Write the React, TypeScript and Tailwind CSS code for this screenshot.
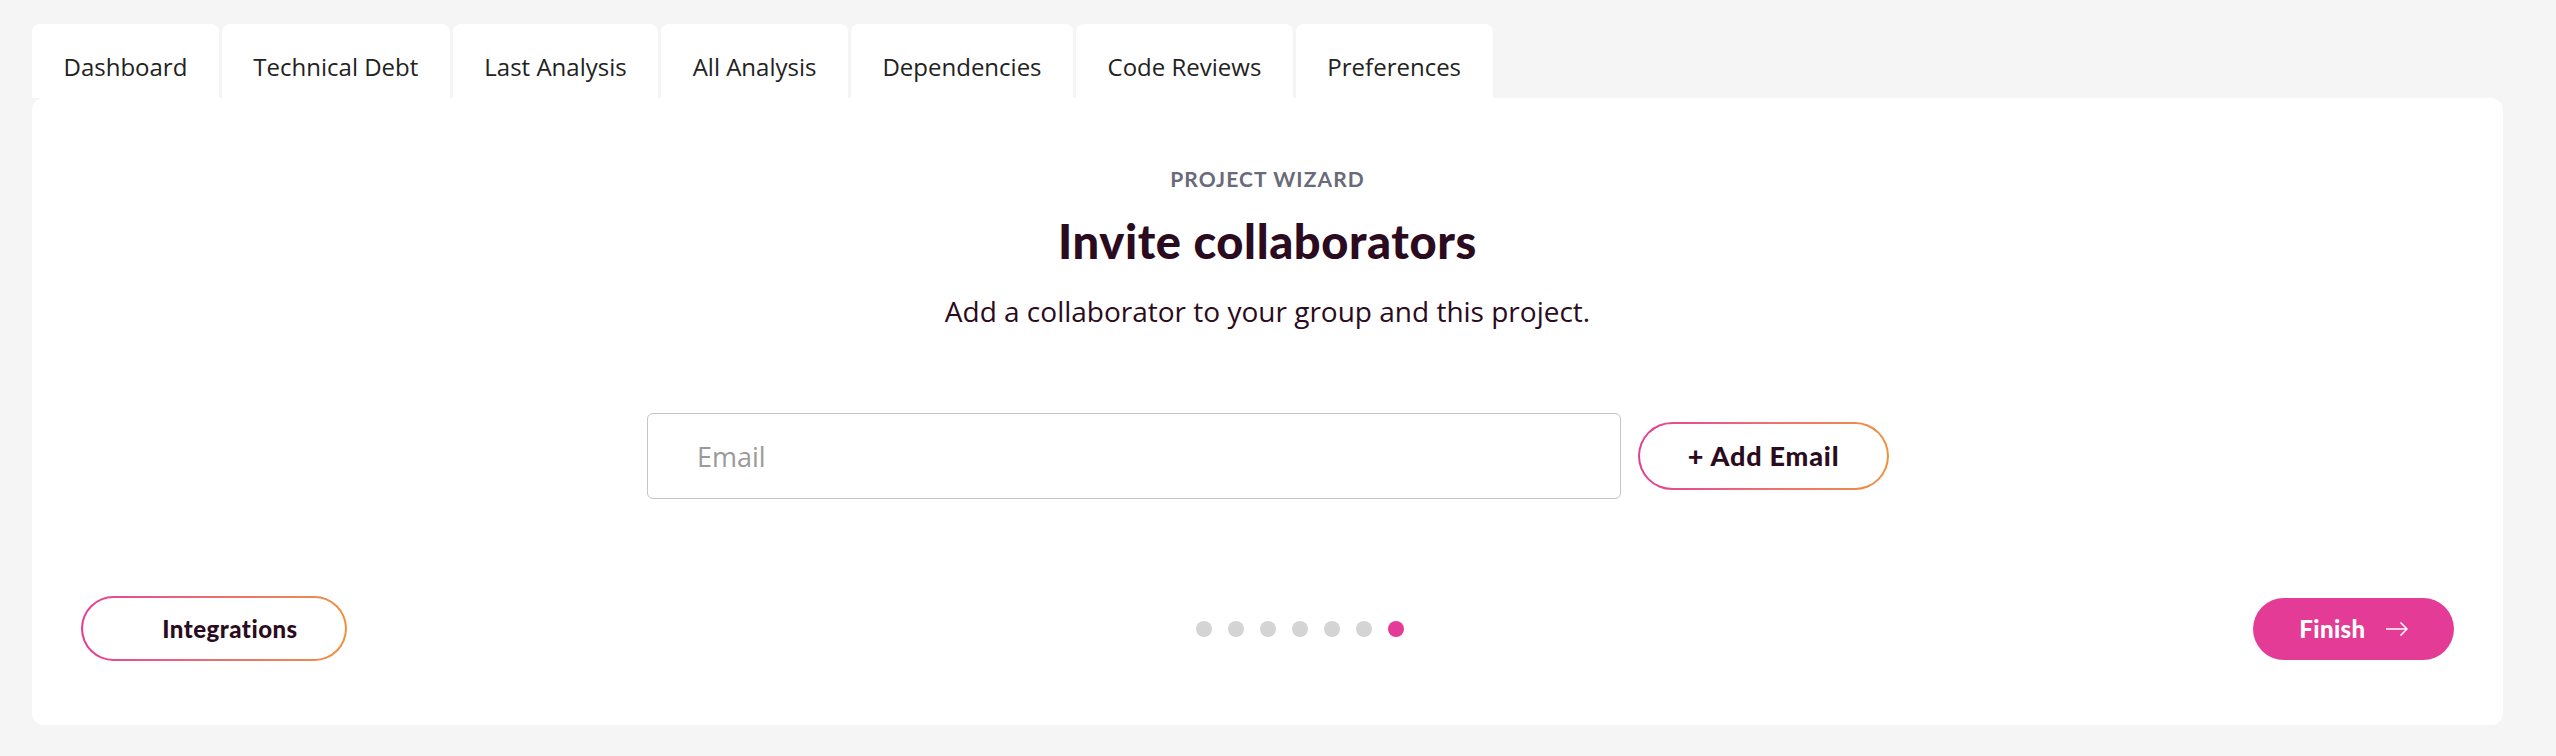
const tabs = ['Dashboard', 'Technical Debt', 'Last Analysis', 'All Analysis', 'Dependencies', 'Code Reviews', 'Preferences']

function GradientPill({ children, className }: { children: React.ReactNode; className: string }) {
  return (
    <div className={`rounded-full bg-gradient-to-r from-[#e43c96] to-[#f0913a] p-[2px] ${className}`}>
      <div className="flex h-full w-full items-center justify-center rounded-full bg-white">{children}</div>
    </div>
  )
}

export default function App() {
  const steps = Array.from({ length: 7 }, (_, i) => i)

  return (
    <div className="min-h-[756px] w-full bg-[#f5f5f5] px-8 pt-6 pb-[31px] font-['Open_Sans',sans-serif]">
      <div className="flex gap-[3px]">
        {tabs.map(t => (
          <div key={t} className="flex h-[74px] items-center rounded-t-lg bg-white px-[31.5px] pt-3 text-[24px] text-[#222]">
            {t}
          </div>
        ))}
      </div>

      <div className="flex w-[2471px] flex-col items-center rounded-xl bg-white pt-[69px] pb-16">
        <div className="text-[21px] leading-6 font-bold tracking-[1.1px] text-[#696a7a] font-['Lato',sans-serif]">PROJECT WIZARD</div>
        <h1 className="mt-[23px] text-[47px] leading-[55px] font-black tracking-[0.6px] text-[#2b0b20] font-['Lato',sans-serif]">Invite collaborators</h1>
        <p className="mt-6 text-[28px] leading-9 text-[#2b0b20]">Add a collaborator to your group and this project.</p>

        <div className="mt-[84px] flex items-center gap-[17px] pl-[1px]">
          <input
            className="h-[86px] w-[974px] rounded-md border-[1.5px] border-[#c9c0c9] px-[49px] text-[27px] text-[#333] placeholder:text-[#9a9a9a] focus:outline-none"
            placeholder="Email"
          />
          <GradientPill className="h-[68px] w-[251px]">
            <span className="text-[27px] font-black tracking-[0.8px] text-[#2b0b20] font-['Lato',sans-serif]">+ Add Email</span>
          </GradientPill>
        </div>

        <div className="mt-[97px] flex w-full items-center justify-between px-[49px]">
          <GradientPill className="h-[65px] w-[266px]">
            <span className="pl-8 text-[24px] font-black tracking-[0.5px] text-[#2b0b20] font-['Lato',sans-serif]">Integrations</span>
          </GradientPill>

          <div className="flex gap-4">
            {steps.map(i => (
              <span key={i} className={`h-4 w-4 rounded-full ${i === 6 ? 'bg-[#e33b96]' : 'bg-[#d4d4d4]'}`} />
            ))}
          </div>

          <button className="flex h-[62px] w-[201px] items-center justify-center gap-5 rounded-full bg-[#e33b96] text-[24px] font-black tracking-[0.4px] text-white font-['Lato',sans-serif]">
            Finish
            <svg width="22" height="14" viewBox="0 0 22 14" fill="none" stroke="white" strokeWidth="1.5">
              <path d="M0 7h21M14.5 0.5 21 7l-6.5 6.5" />
            </svg>
          </button>
        </div>
      </div>
    </div>
  )
}
